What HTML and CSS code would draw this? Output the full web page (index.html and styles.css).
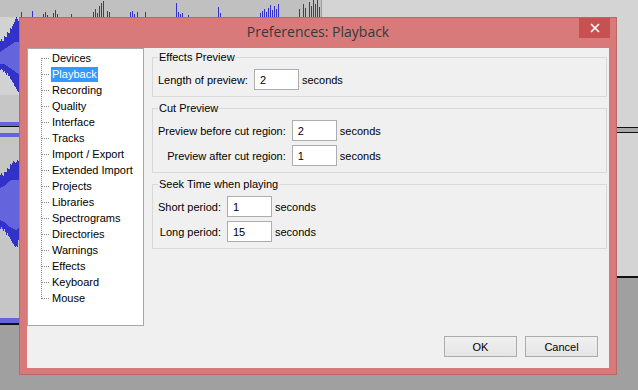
FILE: index.html
```html
<!DOCTYPE html>
<html lang="en">
<head>
    <meta charset="UTF-8">
    <meta name="viewport" content="width=device-width, initial-scale=1.0">
    <title>Preferences: Playback</title>
    <link rel="stylesheet" href="styles.css">
</head>
<body>
    <div class="desktop">
        <!-- audio tracks behind the dialog -->
        <svg class="backdrop" width="638" height="390" viewBox="0 0 638 390" shape-rendering="crispEdges">
            <rect width="638" height="390" fill="#a0a0a0"/>
            <rect x="321" y="0" width="317" height="277" fill="#d4d4d4"/>
            <rect x="321" y="127" width="317" height="6" fill="#a9a9a9"/>
            <rect x="321" y="127" width="317" height="1" fill="#111"/>
            <rect x="321" y="132" width="317" height="1" fill="#111"/>
            <rect x="321" y="276" width="317" height="2" fill="#111"/>

            <rect x="0" y="0" width="321" height="17" fill="#c0c0c0"/>
            <rect x="321" y="0" width="1" height="17" fill="#9c9c9c"/>
            <rect x="0" y="17" width="19" height="78" fill="#d2d2d2"/>
            <rect x="0" y="95" width="19" height="27" fill="#c6c6c6"/>
            <rect x="0" y="122" width="19" height="4" fill="#6464dc"/>
            <rect x="0" y="126" width="19" height="1" fill="#111"/>
            <rect x="0" y="127" width="19" height="6" fill="#c8c8c8"/>
            <rect x="0" y="133" width="19" height="4" fill="#6464dc"/>
            <rect x="0" y="137" width="19" height="181" fill="#c6c6c6"/>
            <rect x="0" y="318" width="19" height="5" fill="#6464dc"/>
            <rect x="0" y="323" width="19" height="2" fill="#111"/>

            <path fill="#3232c8" d="M21 12h1v5h-1zM32 11h1v6h-1zM43 14h1v3h-1zM45 12h1v5h-1zM47 15h1v2h-1zM53 13h1v4h-1zM55 10h1v7h-1zM57 14h1v3h-1zM71 14h1v3h-1zM93 12h1v5h-1zM95 9h1v8h-1zM97 13h1v4h-1zM99 6h1v11h-1zM101 3h1v14h-1zM103 1h1v16h-1zM107 11h1v6h-1zM109 12h1v5h-1zM130 12h1v5h-1zM132 11h1v6h-1zM134 14h1v3h-1zM137 12h1v5h-1zM145 12h1v5h-1zM176 3h1v14h-1zM178 12h1v5h-1zM180 14h1v3h-1zM182 13h1v4h-1zM188 15h1v2h-1zM218 7h1v10h-1zM220 13h1v4h-1zM260 13h1v4h-1zM262 11h1v6h-1zM264 9h1v8h-1zM266 12h1v5h-1zM268 8h1v9h-1zM270 5h1v12h-1zM272 10h1v7h-1zM274 6h1v11h-1zM276 9h1v8h-1zM278 4h1v13h-1zM299 9h1v8h-1zM303 4h1v13h-1zM305 8h1v9h-1zM309 2h1v15h-1zM311 6h1v11h-1zM313 0h1v17h-1zM315 4h1v13h-1zM317 0h1v17h-1zM319 7h1v10h-1z"/>

            <polygon fill="#3232c8" points="0,42 2,38 3,44 5,34 6,40 8,30 9,36 11,26 12,32 13,20 14,28 15,16 16,22 17,13 18,24 19,18 19,96 18,88 17,94 16,84 15,91 14,80 13,86 12,78 11,83 10,74 9,79 8,72 6,76 5,70 3,72 2,68 0,70"/>
            <polygon fill="#6464dc" points="0,52 3,50 6,48 9,46 12,44 15,42 19,42 19,74 16,73 13,70 10,68 7,66 4,64 0,64"/>

            <polygon fill="#3232c8" points="0,176 2,172 3,178 5,170 6,174 8,166 9,172 11,162 12,168 13,158 14,164 15,160 16,166 17,158 18,162 19,160 19,236 18,244 17,250 16,242 15,252 14,240 13,248 12,238 11,244 10,234 9,240 8,232 6,236 5,228 3,232 2,226 0,230"/>
            <polygon fill="#6464dc" points="0,188 4,186 8,182 12,180 16,180 19,180 19,228 16,230 12,228 8,226 4,222 0,220"/>
        </svg>

        <div class="dialog">
            <div class="titlebar">
                <span></span>
                <span class="title">Preferences: Playback</span>
                <button class="close-button" type="button">
                    <svg width="10" height="10" viewBox="0 0 10 10">
                        <path d="M1 1L9 9M9 1L1 9" stroke="#fff" stroke-width="1.6"/>
                    </svg>
                </button>
            </div>

            <div class="client">
                <div class="content">
                    <ul class="tree">
                        <li><span>Devices</span></li>
                        <li class="selected"><span>Playback</span></li>
                        <li><span>Recording</span></li>
                        <li><span>Quality</span></li>
                        <li><span>Interface</span></li>
                        <li><span>Tracks</span></li>
                        <li><span>Import / Export</span></li>
                        <li><span>Extended Import</span></li>
                        <li><span>Projects</span></li>
                        <li><span>Libraries</span></li>
                        <li><span>Spectrograms</span></li>
                        <li><span>Directories</span></li>
                        <li><span>Warnings</span></li>
                        <li><span>Effects</span></li>
                        <li><span>Keyboard</span></li>
                        <li><span>Mouse</span></li>
                    </ul>

                    <div class="page">
                        <fieldset class="group">
                            <legend>Effects Preview</legend>
                            <div class="fields">
                                <label>Length of preview:</label>
                                <input type="text" value="2">
                                <span class="unit">seconds</span>
                            </div>
                        </fieldset>

                        <fieldset class="group">
                            <legend>Cut Preview</legend>
                            <div class="fields">
                                <label>Preview before cut region:</label>
                                <input type="text" value="2">
                                <span class="unit">seconds</span>
                                <label>Preview after cut region:</label>
                                <input type="text" value="1">
                                <span class="unit">seconds</span>
                            </div>
                        </fieldset>

                        <fieldset class="group">
                            <legend>Seek Time when playing</legend>
                            <div class="fields">
                                <label>Short period:</label>
                                <input type="text" value="1">
                                <span class="unit">seconds</span>
                                <label>Long period:</label>
                                <input type="text" value="15">
                                <span class="unit">seconds</span>
                            </div>
                        </fieldset>
                    </div>
                </div>

                <div class="buttons">
                    <button class="push-button" type="button">OK</button>
                    <button class="push-button" type="button">Cancel</button>
                </div>
            </div>
        </div>
    </div>
</body>
</html>
```

FILE: styles.css
```css
body {
    margin: 0;
    background-color: #a0a0a0;
    font-family: "Liberation Sans", Arial, sans-serif;
    font-size: 11px;
    color: #000;
}

.desktop {
    position: relative;
    width: 638px;
    height: 390px;
    overflow: hidden;
}

.backdrop {
    display: block;
}

/* Dialog window, sits over the tracks */
.dialog {
    position: absolute;
    left: 19px;
    top: 17px;
    width: 598px;
    height: 358px;
    box-sizing: border-box;
    border: 1px solid #bb6767;
    background-color: #d87a7a;
    padding: 0 7px 6px 7px;
    display: flex;
    flex-direction: column;
}

.titlebar {
    height: 30px;
    flex: none;
    display: grid;
    grid-template-columns: 1fr auto 1fr;
    align-items: start;
}

.title {
    font-family: "Open Sans", "Liberation Sans", sans-serif;
    font-size: 14px;
    line-height: 20px;
    margin-top: 4px;
    color: #383838;
}

.close-button {
    justify-self: end;
    margin-right: -1px;
    width: 31px;
    height: 20px;
    border: none;
    padding: 0;
    background-color: #c75050;
    display: flex;
    align-items: center;
    justify-content: center;
}

.client {
    height: 320px;
    background-color: #f0f0f0;
    display: flex;
    flex-direction: column;
}

.content {
    height: 278px;
    display: flex;
}

/* Category tree */
.tree {
    width: 117px;
    height: 278px;
    box-sizing: border-box;
    margin: 0;
    padding: 1px 0 0 13px;
    list-style: none;
    background-color: #fff;
    border: 1px solid #a7a7a7;
}

.tree li {
    display: flex;
    align-items: center;
    height: 16px;
    line-height: 16px;
    white-space: nowrap;
}

.tree li::before {
    content: '';
    flex: none;
    width: 9px;
    height: 16px;
    margin-right: 1px;
    background:
        repeating-linear-gradient(to bottom, #8a8a8a 0 1px, transparent 1px 2px) no-repeat 0 0 / 1px 16px,
        repeating-linear-gradient(to right, #8a8a8a 0 1px, transparent 1px 2px) no-repeat 1px 8px / 8px 1px;
}

.tree li:first-child::before {
    background:
        repeating-linear-gradient(to bottom, #8a8a8a 0 1px, transparent 1px 2px) no-repeat 0 8px / 1px 8px,
        repeating-linear-gradient(to right, #8a8a8a 0 1px, transparent 1px 2px) no-repeat 1px 8px / 8px 1px;
}

.tree li:last-child::before {
    background:
        repeating-linear-gradient(to bottom, #8a8a8a 0 1px, transparent 1px 2px) no-repeat 0 0 / 1px 9px,
        repeating-linear-gradient(to right, #8a8a8a 0 1px, transparent 1px 2px) no-repeat 1px 8px / 8px 1px;
}

.tree li span {
    padding: 0 1px;
    line-height: 15px;
}

.tree li.selected span {
    background-color: #3399ff;
    color: #fff;
}

/* Settings page */
.page {
    flex: 1;
    padding: 3px 2px 0 8px;
}

.group {
    margin: 0 0 5px 0;
    padding: 0 5px 6px 5px;
    border: 1px solid #d9d9d9;
    min-width: 0;
}

.group legend {
    padding: 0 1px;
    line-height: 13px;
}

.fields {
    margin-top: 5px;
    display: grid;
    grid-template-columns: auto auto auto;
    justify-content: start;
    align-items: center;
    row-gap: 4px;
}

.fields label {
    justify-self: end;
    padding-right: 6px;
}

.fields input {
    width: 45px;
    height: 21px;
    box-sizing: border-box;
    margin: 0;
    padding: 0 5px;
    border: 1px solid #abadb3;
    background-color: #fff;
    font-family: inherit;
    font-size: 11px;
    color: #000;
}

.unit {
    padding-left: 3px;
}

/* OK / Cancel */
.buttons {
    display: flex;
    justify-content: flex-end;
    gap: 8px;
    margin-top: 10px;
    padding-right: 11px;
}

.push-button {
    width: 73px;
    height: 21px;
    padding: 0;
    border: 1px solid #acacac;
    background: linear-gradient(#f0f0f0, #e5e5e5);
    font-family: inherit;
    font-size: 11px;
    color: #000;
}
```
